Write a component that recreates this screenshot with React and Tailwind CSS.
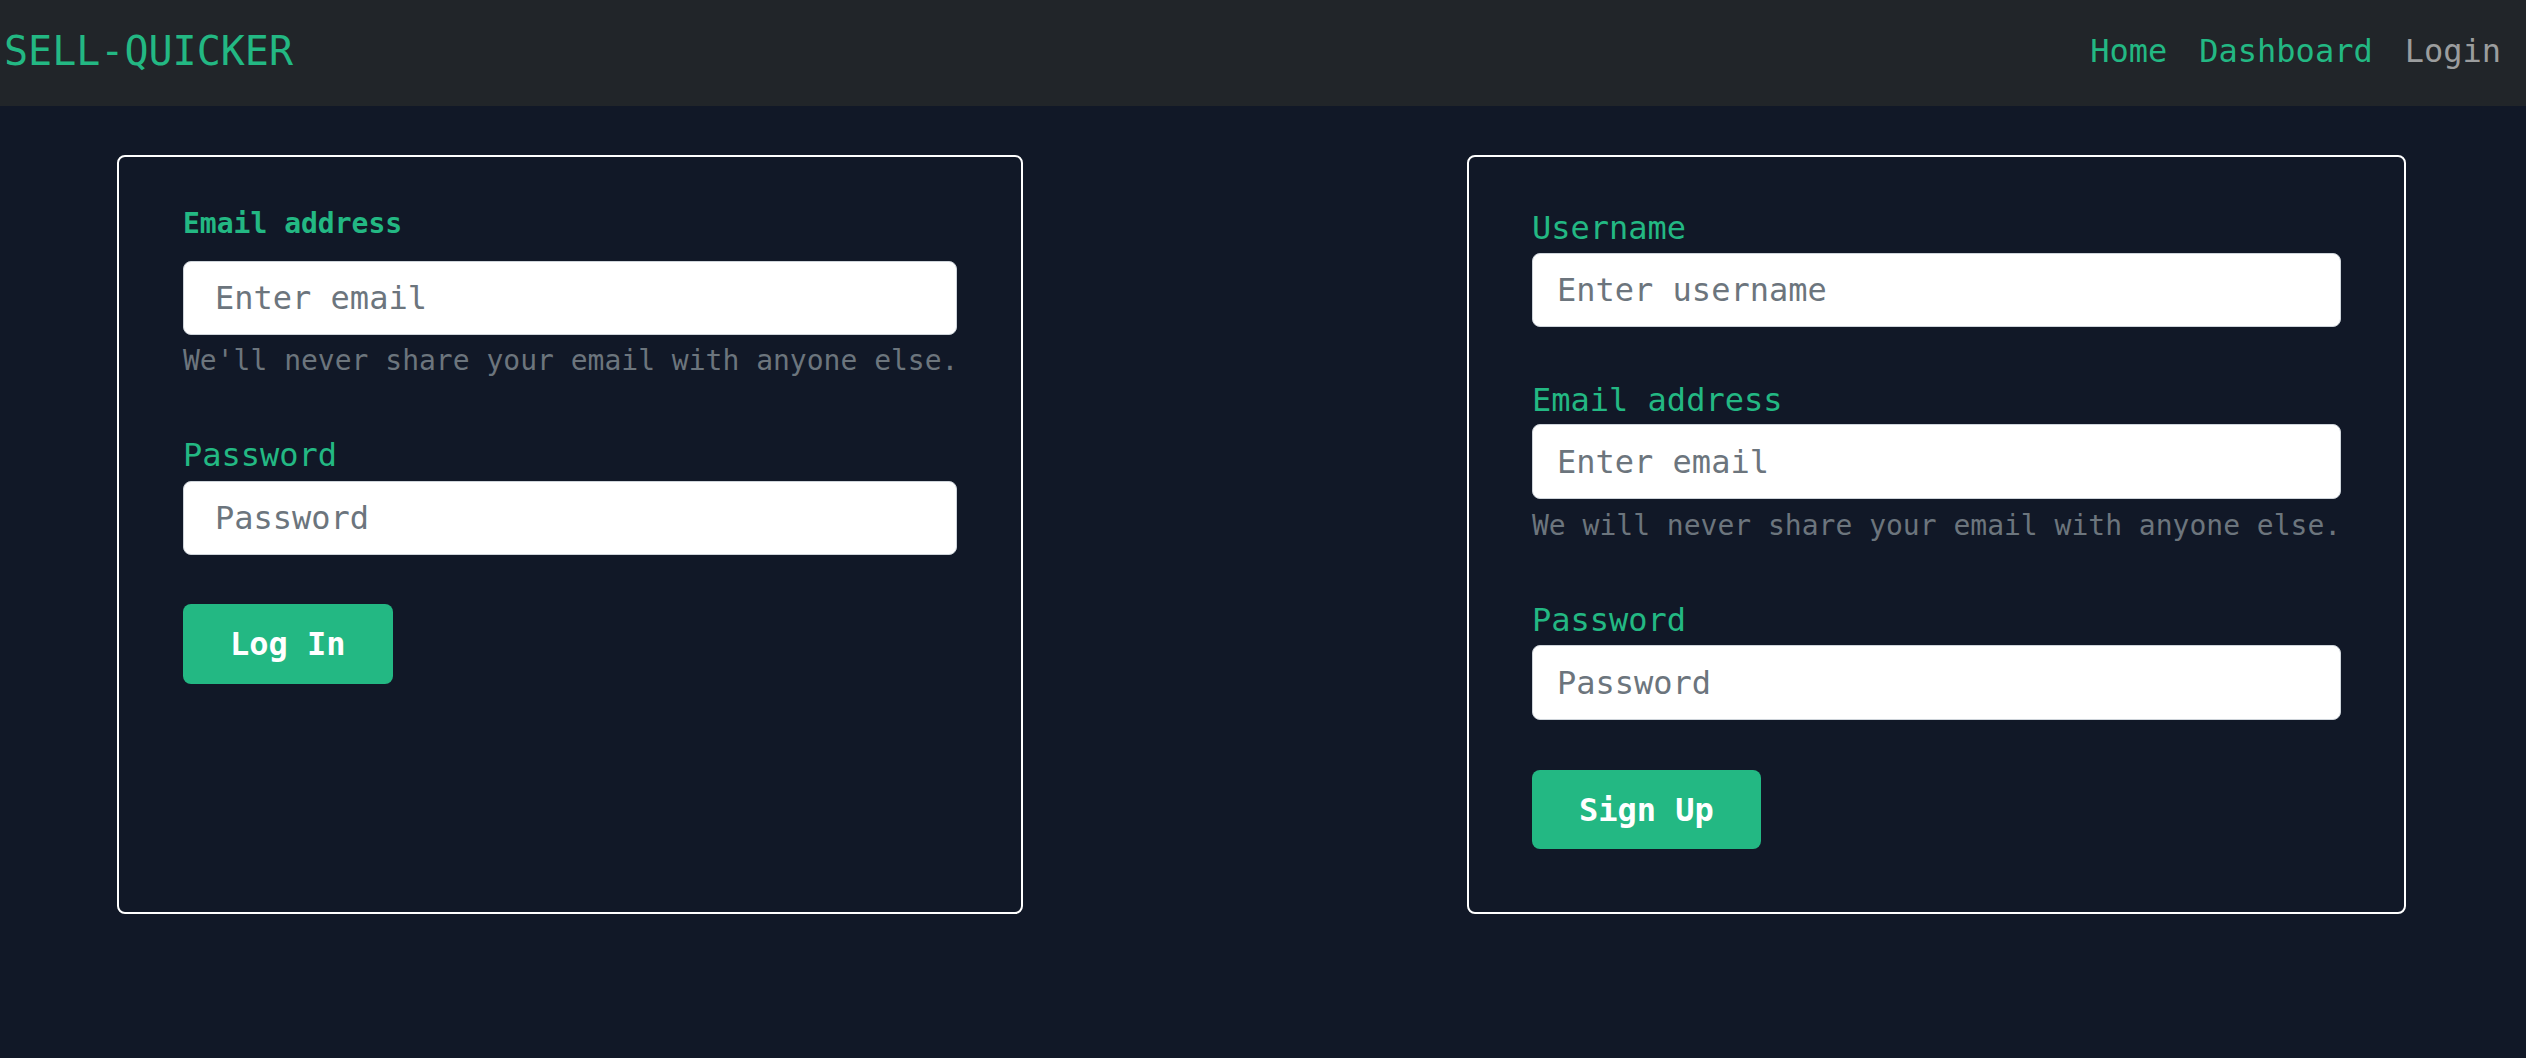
export default function App() {
  return (
    <div className="min-h-screen bg-[#111827] font-['DejaVu_Sans_Mono','Liberation_Mono',monospace]">
      <nav className="h-[106px] bg-[#212529] flex items-center justify-between pl-[4px] pr-[9px] pb-[5px]">
        <span className="text-[40px] leading-none text-[#23b883]">SELL-QUICKER</span>
        <div className="flex text-[32px] leading-none">
          <a className="px-[16px] text-[#23b883]">Home</a>
          <a className="px-[16px] text-[#23b883]">Dashboard</a>
          <a className="px-[16px] text-[#9b9d9e]">Login</a>
        </div>
      </nav>

      <main className="flex justify-between items-stretch pl-[117px] pr-[120px] pt-[49px]">
        {/* Login card */}
        <div className="w-[906px] border-2 border-white rounded-lg px-[64px] pt-[46px] pb-[63px]">
          <div className="mb-[49px]">
            <label className="block text-[28px] leading-[42px] font-bold text-[#23b883] mb-[16px]">
              Email address
            </label>
            <input
              type="email"
              placeholder="Enter email"
              className="block w-full h-[74px] bg-white border border-[#ced4da] rounded-lg px-[31px] text-[32px] text-[#212529] placeholder:text-[#6c757d] outline-none"
            />
            <div className="mt-[5px] text-[28px] leading-[42px] text-[#6c757d] whitespace-nowrap">
              We'll never share your email with anyone else.
            </div>
          </div>
          <div className="mb-[49px]">
            <label className="block text-[32px] leading-[48px] text-[#23b883] mb-[2px]">Password</label>
            <input
              type="password"
              placeholder="Password"
              className="block w-full h-[74px] bg-white border border-[#ced4da] rounded-lg px-[31px] text-[32px] text-[#212529] placeholder:text-[#6c757d] outline-none"
            />
          </div>
          <button className="h-[80px] px-[47px] rounded-lg bg-[#23b883] text-white text-[32px] font-bold leading-none">
            Log In
          </button>
        </div>

        {/* Sign up card */}
        <div className="w-[939px] border-2 border-white rounded-lg px-[63px] pt-[47px] pb-[63px]">
          <div className="mb-[49px]">
            <label className="block text-[32px] leading-[48px] text-[#23b883] mb-[1px]">Username</label>
            <input
              type="text"
              placeholder="Enter username"
              className="block w-full h-[74px] bg-white border border-[#ced4da] rounded-lg px-[24px] text-[32px] text-[#212529] placeholder:text-[#6c757d] outline-none"
            />
          </div>
          <div className="mb-[49px]">
            <label className="block text-[32px] leading-[48px] text-[#23b883]">Email address</label>
            <input
              type="email"
              placeholder="Enter email"
              className="block w-full h-[75px] bg-white border border-[#ced4da] rounded-lg px-[24px] text-[32px] text-[#212529] placeholder:text-[#6c757d] outline-none"
            />
            <div className="mt-[6px] text-[28px] leading-[42px] text-[#6c757d] whitespace-nowrap">
              We will never share your email with anyone else.
            </div>
          </div>
          <div className="mb-[50px]">
            <label className="block text-[32px] leading-[48px] text-[#23b883] mb-[1px]">Password</label>
            <input
              type="password"
              placeholder="Password"
              className="block w-full h-[75px] bg-white border border-[#ced4da] rounded-lg px-[24px] text-[32px] text-[#212529] placeholder:text-[#6c757d] outline-none"
            />
          </div>
          <button className="h-[79px] px-[47px] rounded-lg bg-[#23b883] text-white text-[32px] font-bold leading-none">
            Sign Up
          </button>
        </div>
      </main>
    </div>
  );
}
